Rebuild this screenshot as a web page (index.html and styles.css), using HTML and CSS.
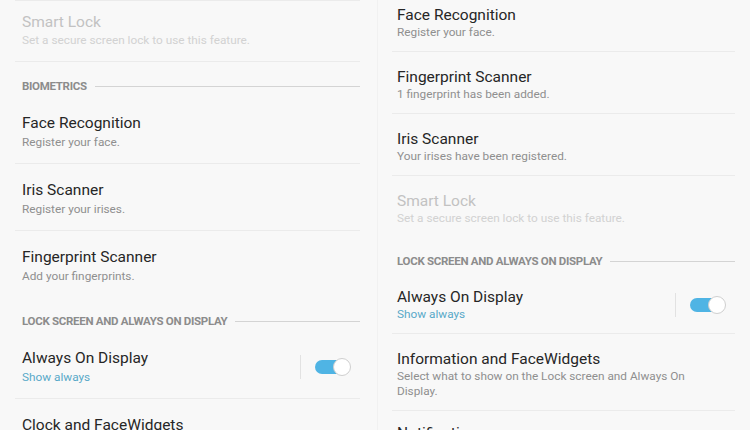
FILE: index.html
```html
<!DOCTYPE html>
<html lang="en">
<head>
    <meta charset="UTF-8">
    <meta name="viewport" content="width=device-width, initial-scale=1.0">
    <title>Lock Screen and Security</title>
    <link rel="stylesheet" href="styles.css">
</head>
<body>
    <!-- Left screen -->
    <div class="panel panel-left">
        <div class="item disabled top-cut-left">
            <div class="title">Smart Lock</div>
            <div class="sub">Set a secure screen lock to use this feature.</div>
        </div>

        <div class="header"><span>BIOMETRICS</span></div>
        <div class="item">
            <div class="title">Face Recognition</div>
            <div class="sub">Register your face.</div>
        </div>
        <div class="item">
            <div class="title">Iris Scanner</div>
            <div class="sub">Register your irises.</div>
        </div>
        <div class="item last">
            <div class="title">Fingerprint Scanner</div>
            <div class="sub">Add your fingerprints.</div>
        </div>

        <div class="header"><span>LOCK SCREEN AND ALWAYS ON DISPLAY</span></div>
        <div class="item with-switch">
            <div class="text">
                <div class="title">Always On Display</div>
                <div class="sub accent">Show always</div>
            </div>
            <div class="vline"></div>
            <div class="switch on"><span class="knob"></span></div>
        </div>
        <div class="item">
            <div class="title">Clock and FaceWidgets</div>
        </div>
    </div>

    <!-- Right screen -->
    <div class="panel panel-right">
        <div class="item top-cut-right">
            <div class="title">Face Recognition</div>
            <div class="sub">Register your face.</div>
        </div>
        <div class="item">
            <div class="title">Fingerprint Scanner</div>
            <div class="sub">1 fingerprint has been added.</div>
        </div>
        <div class="item">
            <div class="title">Iris Scanner</div>
            <div class="sub">Your irises have been registered.</div>
        </div>
        <div class="item disabled last">
            <div class="title">Smart Lock</div>
            <div class="sub">Set a secure screen lock to use this feature.</div>
        </div>

        <div class="header"><span>LOCK SCREEN AND ALWAYS ON DISPLAY</span></div>
        <div class="item with-switch">
            <div class="text">
                <div class="title">Always On Display</div>
                <div class="sub accent">Show always</div>
            </div>
            <div class="vline"></div>
            <div class="switch on"><span class="knob"></span></div>
        </div>
        <div class="item">
            <div class="title">Information and FaceWidgets</div>
            <div class="sub">Select what to show on the Lock screen and Always On<br>Display.</div>
        </div>
        <div class="item bottom-cut">
            <div class="title">Notifications</div>
        </div>
    </div>
</body>
</html>
```

FILE: styles.css
```css
body {
    font-family: Roboto, "Liberation Sans", sans-serif;
    margin: 0;
    padding: 0;
    display: flex;
    height: 430px;
    overflow: hidden;
    background-color: #f8f8f8;
    color: #222;
}

/* Panels */
.panel {
    display: flex;
    flex-direction: column;
    overflow: hidden;
}

.panel-left {
    width: 377px;
    padding: 0 17px 0 15px;
    box-sizing: border-box;
}

.panel-right {
    width: 373px;
    padding: 0 15px 0 14px;
    box-sizing: border-box;
    border-left: 1px solid #f1f1f1;
}

/* List rows */
.item {
    flex-shrink: 0;
    padding: 16px 0 13px 7px;
    border-bottom: 1px solid #ebebeb;
}

.panel-right .item {
    padding: 15px 0 11px 5px;
}

.item.last {
    border-bottom: none;
}

.panel-left .top-cut-left {
    border-top: 1px solid #ebebeb;
    padding-top: 11px;
    padding-bottom: 13px;
}

.panel-left .top-cut-left .sub {
    margin-top: 0;
}

.panel-right .top-cut-right {
    padding-top: 5px;
}

.panel-right .bottom-cut {
    padding-top: 12px;
}

.title {
    font-size: 15.5px;
    line-height: 20px;
    color: #262626;
}

.sub {
    font-size: 11.8px;
    line-height: 16px;
    margin-top: 1px;
    color: #8f8f8f;
}

.panel-right .sub {
    margin-top: 0;
    line-height: 15px;
}

.disabled .title {
    color: #c2c2c2;
}

.disabled .sub {
    color: #d2d2d2;
}

.sub.accent {
    color: #58a9c8;
}

/* Section headers */
.header {
    flex-shrink: 0;
    display: flex;
    align-items: center;
    padding: 16px 0 3px 7px;
    font-size: 11.5px;
    line-height: 16px;
    font-weight: 700;
    letter-spacing: -0.3px;
    color: #8c8c8c;
}

.panel-right .header {
    padding-left: 5px;
}

.header::after {
    content: "";
    flex: 1;
    height: 1px;
    margin-left: 8px;
    background-color: #d4d4d4;
}

/* Row with a switch */
.with-switch {
    display: flex;
    align-items: center;
}

.with-switch .text {
    flex: 1;
}

.vline {
    width: 1px;
    height: 24px;
    background-color: #e2e2e2;
    margin-right: 14px;
}

.switch {
    position: relative;
    width: 36px;
    height: 18px;
    margin-right: 9px;
}

.switch::before {
    content: "";
    position: absolute;
    left: 0;
    top: 2px;
    width: 30px;
    height: 14px;
    border-radius: 7px;
    background-color: #4fb4e4;
}

.switch .knob {
    position: absolute;
    right: 0;
    top: 0;
    width: 16px;
    height: 16px;
    border-radius: 50%;
    background-color: #fff;
    border: 1px solid #cfcfcf;
}
```
